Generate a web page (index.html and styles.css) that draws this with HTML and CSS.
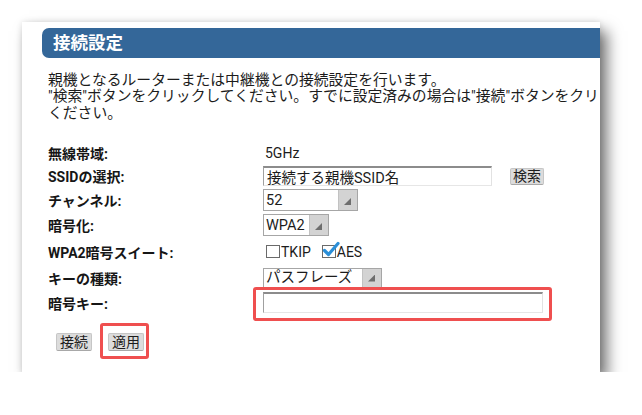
FILE: index.html
```html
<!DOCTYPE html>
<html lang="ja">
<head>
<meta charset="utf-8">
<title>接続設定</title>
<link rel="stylesheet" href="styles.css">
</head>
<body>
<section class="card">
  <h1 class="card-title">接続設定</h1>
  <p class="intro">親機となるルーターまたは中継機との接続設定を行います。<br>"検索"ボタンをクリックしてください。すでに設定済みの場合は"接続"ボタンをクリックして<br>ください。</p>
  <div class="form">
    <span class="label">無線帯域:</span>
    <span class="value value-text">5GHz</span>

    <span class="label">SSIDの選択:</span>
    <span class="value">
      <input class="text-input ssid-input" type="text" value="接続する親機SSID名">
      <button class="btn btn-search" type="button">検索</button>
    </span>

    <span class="label">チャンネル:</span>
    <span class="value">
      <span class="select select-channel"><select><option>52</option></select><span class="select-arrow"></span></span>
    </span>

    <span class="label">暗号化:</span>
    <span class="value">
      <span class="select select-enc"><select><option>WPA2</option></select><span class="select-arrow"></span></span>
    </span>

    <span class="label">WPA2暗号スイート:</span>
    <span class="value checks">
      <span class="check"><span class="check-box"></span><span class="check-text">TKIP</span></span>
      <span class="check"><span class="check-box checked"><svg class="check-mark" viewBox="0 0 18 18" width="18" height="18"><path d="M2.5 9.5 L6.5 13.5 L16 2.5" fill="none" stroke="#2b8fd8" stroke-width="3.2" stroke-linecap="round" stroke-linejoin="round"/></svg></span><span class="check-text">AES</span></span>
    </span>

    <span class="label">キーの種類:</span>
    <span class="value">
      <span class="select select-keytype"><select><option>パスフレーズ</option></select><span class="select-arrow"></span></span>
    </span>

    <span class="label">暗号キー:</span>
    <span class="value">
      <span class="annotated annotated-key"><input class="text-input key-input" type="text" value=""></span>
    </span>
  </div>
  <div class="actions">
    <button class="btn btn-action" type="button">接続</button>
    <span class="annotated annotated-apply"><button class="btn btn-action" type="button">適用</button></span>
  </div>
</section>
</body>
</html>
```

FILE: styles.css
```css
* {
  box-sizing: border-box;
}

html, body {
  margin: 0;
  padding: 0;
  background: #ffffff;
}

body {
  font-family: "Roboto", "Noto Sans CJK JP", sans-serif;
  color: #1c1c1c;
}

.card {
  margin: 22px 0 0 22px;
  width: 578px;
  height: 350px;
  padding-top: 6px;
  background: #ffffff;
  overflow: hidden;
  box-shadow: 7px 9px 14px rgba(0, 0, 0, 0.55), 0 0 6px rgba(0, 0, 0, 0.12);
}

.card-title {
  margin: 0 0 0 20px;
  height: 30px;
  padding-left: 11px;
  background: #346799;
  border-radius: 7px 0 0 7px;
  color: #ffffff;
  font-size: 17.5px;
  font-weight: 700;
  line-height: 30px;
}

.intro {
  margin: 13.75px 0 0 26px;
  font-size: 14.8px;
  line-height: 16.5px;
  white-space: nowrap;
}

.form {
  display: grid;
  grid-template-columns: 215px auto;
  grid-template-rows: 23px 24px 24px 26px 27px 25px 25px;
  align-items: center;
  margin: 19.75px 0 0 26px;
}

.label {
  font-size: 14px;
  font-weight: 700;
  color: #161616;
}

.value {
  display: flex;
  align-items: center;
  font-size: 14px;
}

.value-text {
  padding-left: 2px;
}

.text-input {
  height: 20px;
  padding: 0 0 0 3px;
  border-style: solid;
  border-width: 2px 1px 1px 1px;
  border-color: #8c8c8c #e2e2e2 #e6e6e6 #a0a0a0;
  background: #ffffff;
  font-family: inherit;
  font-size: 14.5px;
  color: #1c1c1c;
  outline: none;
}

.ssid-input {
  width: 229px;
}

.key-input {
  width: 280px;
  height: 21px;
}

.btn {
  display: inline-flex;
  align-items: center;
  justify-content: center;
  padding: 0;
  background: #dcdcdc;
  border: 1px solid #c6c6c6;
  border-bottom-color: #a8a8a8;
  border-radius: 2px;
  font-family: inherit;
  font-size: 14px;
  color: #1c1c1c;
  line-height: 1;
}

.btn-search {
  margin-left: 18px;
  width: 34px;
  height: 17px;
}

.btn-action {
  width: 36px;
  height: 18px;
}

.select {
  display: inline-flex;
  height: 22px;
  border: 1px solid #a6a6a6;
  background: #ffffff;
}

.select select {
  appearance: none;
  -webkit-appearance: none;
  flex: 1;
  min-width: 0;
  height: 100%;
  padding: 0 0 0 2px;
  border: 0;
  background: transparent;
  font-family: inherit;
  font-size: 14.5px;
  color: #1c1c1c;
  outline: none;
}

.select-arrow {
  position: relative;
  width: 19px;
  background: #d3d3d3;
  border-left: 1px solid #c2c2c2;
}

.select-arrow::after {
  content: "";
  position: absolute;
  right: 6px;
  bottom: 5px;
  width: 7px;
  height: 7px;
  background: #6e6e6e;
  clip-path: polygon(100% 0, 100% 100%, 0 100%);
}

.select-channel {
  width: 95px;
}

.select-enc {
  width: 66px;
}

.select-keytype {
  width: 119px;
  height: 20px;
}

.checks {
  padding-left: 3px;
}

.check {
  display: inline-flex;
  align-items: center;
}

.check + .check {
  margin-left: 11px;
}

.check-box {
  position: relative;
  width: 14px;
  height: 13px;
  border: 1px solid #6a6a6a;
  background: #ffffff;
}

.check-mark {
  position: absolute;
  left: -1px;
  top: -5px;
}

.check-text {
  margin-left: 1px;
  font-size: 14px;
}

.actions {
  display: flex;
  align-items: center;
  gap: 16px;
  margin: 18px 0 0 34px;
}

.annotated {
  position: relative;
  display: inline-flex;
}

.annotated::after {
  content: "";
  position: absolute;
  border: 3px solid #ef4f4f;
  border-radius: 3px;
  pointer-events: none;
}

.annotated-key::after {
  top: -5px;
  right: -9px;
  bottom: -8px;
  left: -10px;
}

.annotated-apply::after {
  top: -10px;
  right: -5px;
  bottom: -8px;
  left: -8px;
}
```
